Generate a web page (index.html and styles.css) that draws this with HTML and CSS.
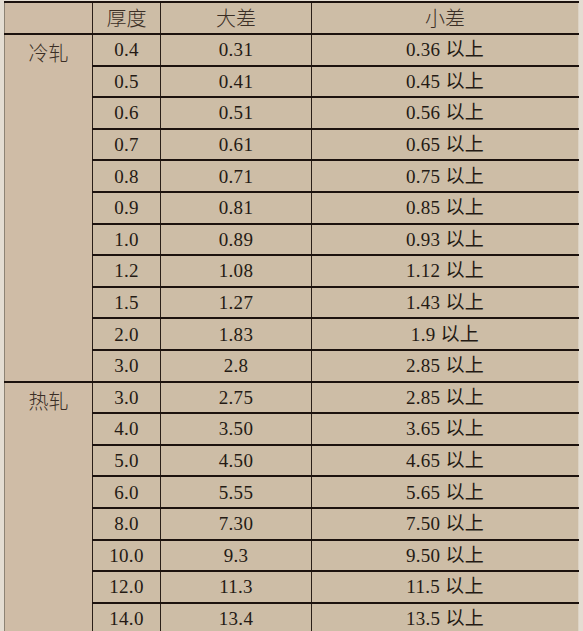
FILE: index.html
```html
<!DOCTYPE html>
<html lang="zh">
<head>
<meta charset="utf-8">
<link rel="stylesheet" href="styles.css">
</head>
<body>
<table class="spec">
  <colgroup>
    <col class="c-type">
    <col class="c-thick">
    <col class="c-big">
    <col class="c-small">
  </colgroup>
  <thead>
    <tr class="head">
      <th class="type"></th>
      <th>厚度</th>
      <th>大差</th>
      <th>小差</th>
    </tr>
  </thead>
  <tbody>
    <tr><td class="type" rowspan="11">冷轧</td><td>0.4</td><td>0.31</td><td>0.36 以上</td></tr>
    <tr><td>0.5</td><td>0.41</td><td>0.45 以上</td></tr>
    <tr><td>0.6</td><td>0.51</td><td>0.56 以上</td></tr>
    <tr><td>0.7</td><td>0.61</td><td>0.65 以上</td></tr>
    <tr><td>0.8</td><td>0.71</td><td>0.75 以上</td></tr>
    <tr><td>0.9</td><td>0.81</td><td>0.85 以上</td></tr>
    <tr><td>1.0</td><td>0.89</td><td>0.93 以上</td></tr>
    <tr><td>1.2</td><td>1.08</td><td>1.12 以上</td></tr>
    <tr><td>1.5</td><td>1.27</td><td>1.43 以上</td></tr>
    <tr><td>2.0</td><td>1.83</td><td>1.9 以上</td></tr>
    <tr><td>3.0</td><td>2.8</td><td>2.85 以上</td></tr>
    <tr><td class="type" rowspan="8">热轧</td><td>3.0</td><td>2.75</td><td>2.85 以上</td></tr>
    <tr><td>4.0</td><td>3.50</td><td>3.65 以上</td></tr>
    <tr><td>5.0</td><td>4.50</td><td>4.65 以上</td></tr>
    <tr><td>6.0</td><td>5.55</td><td>5.65 以上</td></tr>
    <tr><td>8.0</td><td>7.30</td><td>7.50 以上</td></tr>
    <tr><td>10.0</td><td>9.3</td><td>9.50 以上</td></tr>
    <tr><td>12.0</td><td>11.3</td><td>11.5 以上</td></tr>
    <tr><td>14.0</td><td>13.4</td><td>13.5 以上</td></tr>
  </tbody>
</table>
</body>
</html>
```

FILE: styles.css
```css
html, body {
  margin: 0;
  padding: 0;
  background: #e4ddd2;
  overflow: hidden;
}

.spec {
  margin: 1px 0 0 4px;
  width: 574px;
  table-layout: fixed;
  border-collapse: collapse;
  background: #cdbda6;
  color: #241a14;
  font-family: "Liberation Serif", "Noto Sans CJK SC", serif;
  font-size: 19px;
  letter-spacing: 0.3px;
  border-top: 2px solid #1c120e;
  border-left: 1px solid #8d8374;
  border-right: 1px solid #ddd3c4;
}

.c-type { width: 88px; }
.c-thick { width: 68px; }
.c-big { width: 151px; }
.c-small { width: 267px; }

.spec th,
.spec td {
  padding: 0;
  text-align: center;
  font-weight: normal;
  height: 29.6px;
  border-bottom: 2px solid #1c120e;
  border-left: 1px solid #2a1f18;
  line-height: 1;
}

.spec th:first-child,
.spec td.type {
  border-left: none;
}

.spec .head th {
  height: 30px;
  font-family: "Noto Sans CJK SC", sans-serif;
  font-weight: 300;
  font-size: 20px;
  letter-spacing: 0;
  color: #3a2e25;
}

.spec td.type {
  vertical-align: top;
  padding-top: 8px;
  background: #cfbca6;
  font-family: "Noto Sans CJK SC", sans-serif;
  font-weight: 300;
  font-size: 20px;
  letter-spacing: 0;
  color: #3a2e25;
}

.spec th.type {
  background: #cfbca6;
}
```
